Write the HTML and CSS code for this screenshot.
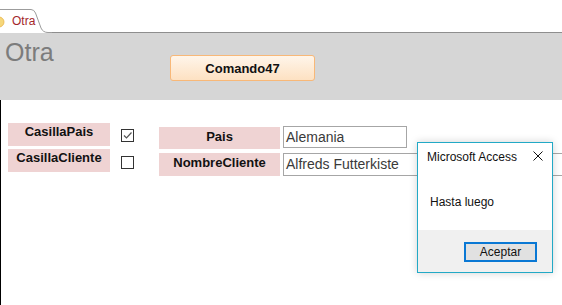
FILE: index.html
```html
<!DOCTYPE html>
<html>
<head>
    <meta charset="utf-8">
    <meta name="viewport" content="width=device-width">
    <title>Otra</title>
    <link rel="stylesheet" href="styles.css">
</head>
<body>
    <div class="tab-strip">
        <div class="tab">
            <svg class="tab-shape" width="52" height="24" viewBox="0 0 52 24">
                <path d="M-2 0.5 H31 Q34 0.5 35.5 4 L41 19 Q43 23.5 48 23.5 H52 V24 H-2 Z" fill="#fff"/>
                <path d="M-2 0.5 H31 Q34 0.5 35.5 4 L41 19 Q43 23.5 48 23.5 H52" fill="none" stroke="#9c9c9c"/>
            </svg>
            <svg class="tab-icon" width="5" height="12" viewBox="0 0 5 12">
                <circle cx="-1" cy="6" r="5" fill="#f6d77a" stroke="#e9b54a" stroke-width="0.8"/>
            </svg>
            <span class="tab-label">Otra</span>
        </div>
        <div class="tab-rest"></div>
    </div>

    <div class="form-header">
        <div class="form-title">Otra</div>
        <button class="command" type="button">Comando47</button>
    </div>

    <div class="form-detail">
        <div class="row row-first">
            <div class="caption caption-left">CasillaPais</div>
            <div class="check check-first">
                <svg width="11" height="11" viewBox="0 0 11 11">
                    <path d="M2 5.5 L4.5 8 L9.5 2.5" fill="none" stroke="#555" stroke-width="1.2"/>
                </svg>
            </div>
            <div class="caption caption-right">Pais</div>
            <div class="textbox">Alemania</div>
        </div>
        <div class="row row-second">
            <div class="caption caption-left">CasillaCliente</div>
            <div class="check check-second"></div>
            <div class="caption caption-right">NombreCliente</div>
            <div class="textbox textbox-wide">Alfreds Futterkiste</div>
        </div>

        <div class="msgbox">
            <div class="msgbox-title">
                <span>Microsoft Access</span>
                <svg class="msgbox-close" width="10" height="10" viewBox="0 0 10 10">
                    <path d="M0.5 0.5 L9.5 9.5 M9.5 0.5 L0.5 9.5" stroke="#111" stroke-width="1"/>
                </svg>
            </div>
            <div class="msgbox-body">Hasta luego</div>
            <div class="msgbox-footer">
                <button class="msgbox-ok" type="button">Aceptar</button>
            </div>
        </div>
    </div>
</body>
</html>
```

FILE: styles.css
```css
body {
    margin: 0;
    padding: 0;
    background-color: #fff;
    font-family: "Liberation Sans", Arial, sans-serif;
    overflow: hidden;
    width: 562px;
    height: 305px;
}

/* tab strip */
.tab-strip {
    display: flex;
    padding-top: 9px;
    height: 24px;
}

.tab {
    position: relative;
    width: 52px;
    height: 24px;
    display: flex;
    align-items: flex-start;
}

.tab-shape {
    position: absolute;
    left: 0;
    top: 0;
}

.tab-icon {
    position: relative;
    margin-top: 7px;
}

.tab-label {
    position: relative;
    margin-left: 7px;
    margin-top: 5px;
    font-size: 12px;
    line-height: 14px;
    color: #a3262b;
}

.tab-rest {
    flex: 1;
    height: 23px;
    border-bottom: 1px solid #8e8e8e;
}

/* header section */
.form-header {
    display: flex;
    align-items: flex-start;
    height: 67px;
    background-color: #d6d6d6;
}

.form-title {
    margin-left: 5px;
    margin-top: 7px;
    width: 50px;
    font-size: 25px;
    line-height: 25px;
    color: #7c7c7c;
}

.command {
    margin-left: 115px;
    margin-top: 22px;
    width: 145px;
    height: 26px;
    padding: 0;
    border: 1px solid #f8b878;
    border-radius: 3px;
    background: linear-gradient(#fff5ea, #fde1c2);
    font-family: "Liberation Sans", Arial, sans-serif;
    font-size: 13px;
    font-weight: bold;
    color: #111;
}

/* detail section */
.form-detail {
    position: relative;
    height: 205px;
    border-left: 1px solid #000;
    padding-top: 23px;
    box-sizing: border-box;
}

.row {
    display: flex;
    align-items: flex-start;
    height: 26px;
    margin-left: 7px;
}

.row > * {
    flex-shrink: 0;
}

.caption {
    background-color: #efd3d3;
    font-size: 13px;
    font-weight: bold;
    line-height: 16px;
    text-align: center;
    color: #111;
    box-sizing: border-box;
}

.caption-left {
    width: 102px;
    height: 23px;
    padding-top: 1px;
}

.caption-right {
    width: 121px;
    height: 22px;
    padding-top: 2px;
    margin-left: 25px;
}

.row-first .caption-right {
    margin-top: 4px;
}

.row-second .caption-right {
    height: 23px;
    margin-top: 4px;
}

.check {
    width: 13px;
    height: 13px;
    margin-left: 11px;
    border: 1px solid #333;
    box-sizing: border-box;
    background-color: #fff;
}

.check svg {
    display: block;
}

.check-first {
    margin-top: 6px;
}

.check-second {
    margin-top: 7px;
}

.textbox {
    width: 124px;
    height: 22px;
    margin-left: 3px;
    margin-top: 3px;
    padding-left: 2px;
    border: 1px solid #a6a6a6;
    box-sizing: border-box;
    font-size: 14px;
    line-height: 20px;
    color: #3a3a3a;
    background-color: #fff;
}

.textbox-wide {
    width: 300px;
    height: 23px;
    margin-top: 4px;
}

/* message box */
.msgbox {
    position: absolute;
    left: 416px;
    top: 42px;
    width: 136px;
    height: 131px;
    border: 1px solid #22a9c6;
    box-sizing: border-box;
    background-color: #fff;
    display: flex;
    flex-direction: column;
    box-shadow: 0 0 8px rgba(0, 0, 0, 0.18);
    font-size: 12px;
    color: #111;
}

.msgbox-title {
    height: 30px;
    display: flex;
    justify-content: space-between;
    align-items: flex-start;
    padding: 7px 9px 0 9px;
    box-sizing: border-box;
    line-height: 14px;
}

.msgbox-close {
    margin-top: 1px;
}

.msgbox-body {
    height: 57px;
    padding: 22px 0 0 12px;
    box-sizing: border-box;
    line-height: 14px;
}

.msgbox-footer {
    flex: 1;
    background-color: #f0f0f0;
    display: flex;
    justify-content: flex-end;
    align-items: flex-start;
    padding: 12px 15px 0 0;
}

.msgbox-ok {
    width: 73px;
    height: 20px;
    padding: 0;
    border: 2px solid #0a78d4;
    background-color: #e1e1e1;
    font-family: "Liberation Sans", Arial, sans-serif;
    font-size: 12px;
    line-height: 16px;
    color: #111;
}
```
